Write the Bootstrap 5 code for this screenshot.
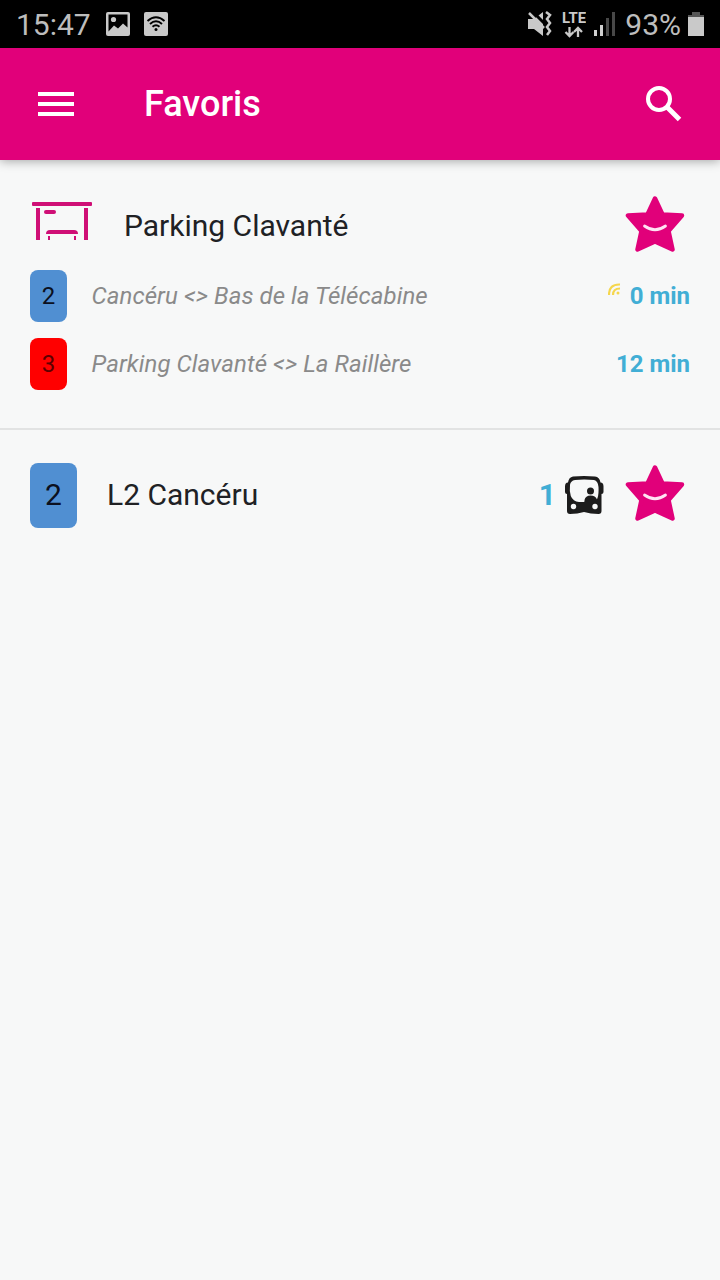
<!DOCTYPE html>
<html lang="fr">
<head>
<meta charset="utf-8">
<meta name="viewport" content="width=device-width, initial-scale=1">
<title>Favoris</title>
<link href="https://cdn.jsdelivr.net/npm/bootstrap@5.3.0/dist/css/bootstrap.min.css" rel="stylesheet">
<style>
body{background:#f7f8f8;font-family:Roboto,"Liberation Sans",sans-serif;color:#202124;min-height:1280px;line-height:1.2}
svg{display:block;flex:none}
.status{height:48px;background:#000;color:#bdbdbd;padding:0 15px 0 16px;font-size:30px}
.status span{padding-top:2px}
.photo{margin-left:15px}
.wifi{margin-left:14px}
.lte{margin-left:9px}
.signal{margin-left:7px}
.charge{margin-left:9px}
.battery{margin-left:6px}
.appbar{height:112px;background:#e1007a;padding:0 38px;box-shadow:0 1px 10px rgba(0,0,0,.35)}
.appbar h1{font-size:36px;font-weight:500;margin-left:70px;line-height:42px}
.fav{padding:0 30px}
.fav-first{height:270px;padding-top:30px;border-bottom:2px solid #e2e3e3}
.head{height:72px;font-size:30px;margin-bottom:8px}
.shelter{margin:-10px 30px 0 0}
.line{height:52px;font-size:24px;margin-bottom:16px}
.tag{width:37px;height:52px;border-radius:8px;color:#0b1020;font-size:24px}
.tag-lg{width:47px;height:65px;font-size:30px}
.blue{background:#508fd2}
.red{background:#f00;color:#5c0000}
.route{color:#8a8a8a;font-style:italic;margin-left:24.5px;letter-spacing:.08px}
.live{margin:-13px 9px 0 auto}
.wait{color:#41aed5;font-weight:700}
.star{margin:-2px 5px 0 0}
.second{height:130px;font-size:30px}
.second .star{margin-left:20px}
.label{margin-left:30px}
.bus{margin-left:9px}
</style>
</head>
<body>
<svg width="0" height="0" class="position-absolute"><defs>
<symbol id="star" viewBox="0 0 60 60"><path d="M30 3.500 37.500 19.500 57 20.500 43.500 36 47.500 54.500 30 46.500 12.500 54.500 16.500 36 3 20.500 22.500 19.500Z" fill="#e1007a" stroke="#e1007a" stroke-width="4.500" stroke-linejoin="round"/><path d="M19.500 31Q30 38.500 40.500 31" fill="none" stroke="#ffe3f3" stroke-width="2.800" stroke-linecap="round"/></symbol>
</defs></svg>
<header>
<div class="status d-flex align-items-center">
  <span>15:47</span>
  <svg class="photo" width="24" height="24" viewBox="0 0 24 24"><rect width="24" height="24" rx="2" fill="#c9c9c9"/><path d="M2.500 2.500h19v13l-4.500-4-5 5-4-3-5.500 6z" fill="#000"/><circle cx="7.500" cy="7.500" r="2.600" fill="#c9c9c9"/></svg>
  <svg class="wifi" width="24" height="24" viewBox="0 0 24 24"><rect width="24" height="24" rx="2" fill="#c9c9c9"/><g fill="none" stroke="#000" stroke-width="1.900"><path d="M3.500 9Q12 1.500 20.500 9M6 12Q12 6.500 18 12M8.500 14.800Q12 11.500 15.500 14.800"/></g><circle cx="12" cy="17.500" r="1.500"/></svg>
  <svg class="ms-auto" width="25" height="26" viewBox="0 0 25 26"><path d="M1 8h6l9-7v24l-9-7H1z" fill="#c9c9c9"/><path d="M5 0 19 14" stroke="#000" stroke-width="3"/><path d="M2 2 17 17" stroke="#c9c9c9" stroke-width="2.500"/><path d="m19 1 4 3-3 4 3 4-3 4 3 4-3 4" fill="none" stroke="#c9c9c9" stroke-width="2.500"/></svg>
  <svg class="lte" width="25" height="28" viewBox="0 0 25 28"><text x="1" y="13" font-size="14.500" font-weight="700" textLength="24" lengthAdjust="spacingAndGlyphs" fill="#c9c9c9">LTE</text><path d="M8.500 17v8.500M4.500 22l4 4 4-4M17 27v-8.500M13 22l4-4 4 4" fill="none" stroke="#c9c9c9" stroke-width="2.300"/></svg>
  <svg class="signal" width="23" height="24" viewBox="0 0 23 24"><path d="M1 18h3v6H1zM7 13h3v11H7z" fill="#d0d0d0"/><path d="M13 6h3v18h-3zM19 0h3v24h-3z" fill="#484848"/></svg>
  <span class="charge">93%</span>
  <svg class="battery" width="18" height="24" viewBox="0 0 18 24"><path d="M5 0h8v4H5zM1 3h16v3H1z" fill="#555"/><path d="M1 5h16v19H1z" fill="#c9c9c9"/></svg>
</div>
<nav class="appbar d-flex align-items-center text-white position-relative">
  <svg width="36" height="24" viewBox="0 0 36 24" fill="#fff"><path d="M0 0h36v4H0zM0 10h36v4H0zM0 20h36v4H0z"/></svg>
  <h1 class="mb-0">Favoris</h1>
  <svg class="ms-auto" width="37" height="36" viewBox="0 0 37 36" fill="none" stroke="#fff"><circle cx="14" cy="13" r="11" stroke-width="4"/><path d="m22 21 12.500 12.500" stroke-width="5"/></svg>
</nav>
</header>
<main>
<section class="fav fav-first">
  <div class="head d-flex align-items-center">
    <svg class="shelter" width="64" height="44" viewBox="0 0 64 44" fill="#cf0f76"><rect x="2" y="3" width="60" height="4" rx="1"/><path d="M6 9h4v32H6zM54 9h4v32h-4zM18 37h2v4h-2zM44 37h2v4h-2z"/><rect x="14" y="11" width="12" height="4" rx="2"/><path d="M16 35q0-4 4-4h24q4 0 4 4z"/></svg>
    <span>Parking Clavanté</span>
    <svg class="star ms-auto" width="60" height="60"><use href="#star"/></svg>
  </div>
  <div class="line d-flex align-items-center">
    <span class="tag blue d-flex align-items-center justify-content-center">2</span>
    <span class="route">Cancéru &lt;&gt; Bas de la Télécabine</span>
    <svg class="live" width="13" height="13" viewBox="0 0 13 13" fill="none" stroke="#f5d64c" stroke-width="2.200"><path d="M1 12Q1 1 12 1.500M5 12Q5 5.500 12 5.500"/><circle cx="10" cy="10" r="1.500" fill="#f5d64c" stroke="none"/></svg>
    <span class="wait">0 min</span>
  </div>
  <div class="line d-flex align-items-center">
    <span class="tag red d-flex align-items-center justify-content-center">3</span>
    <span class="route">Parking Clavanté &lt;&gt; La Raillère</span>
    <span class="wait ms-auto">12 min</span>
  </div>
</section>
<section class="fav second d-flex align-items-center">
  <span class="tag tag-lg blue d-flex align-items-center justify-content-center">2</span>
  <span class="label">L2 Cancéru</span>
  <span class="wait ms-auto">1</span>
  <svg class="bus" width="40" height="40" viewBox="0 0 40 40"><path d="M8 1.500Q19 .5 30 1.500 34.500 2 35.500 7.500q3 0 3 4V17q0 2-2 2v17q0 3-3 3-8 0-14.500-2-6.500 2-14 2-3 0-3-3V19q-2 0-2-2v-5.500q0-4 3-4 .8-5.300 5-6z" fill="#1c1c1c"/><path d="M10 5Q19 3.800 29 5q4 .8 4.500 7 .4 7-1 11-1 3.500-3 4H14Q8 26.500 5.800 21 4.300 16 5 10 5.500 5.800 10 5z" fill="#f7f8f8"/><circle cx="25.500" cy="16" r="3.500" fill="#1c1c1c"/><path d="M18.500 28Q20 26 19.500 25q1-4.500 6-4.500t6.500 4V28z" fill="#1c1c1c"/><circle cx="8.500" cy="31.500" r="2.700" fill="#f7f8f8"/><circle cx="30" cy="31.500" r="2.700" fill="#f7f8f8"/></svg>
  <svg class="star" width="60" height="60"><use href="#star"/></svg>
</section>
</main>
<script src="https://cdn.jsdelivr.net/npm/bootstrap@5.3.0/dist/js/bootstrap.bundle.min.js"></script>
</body>
</html>
